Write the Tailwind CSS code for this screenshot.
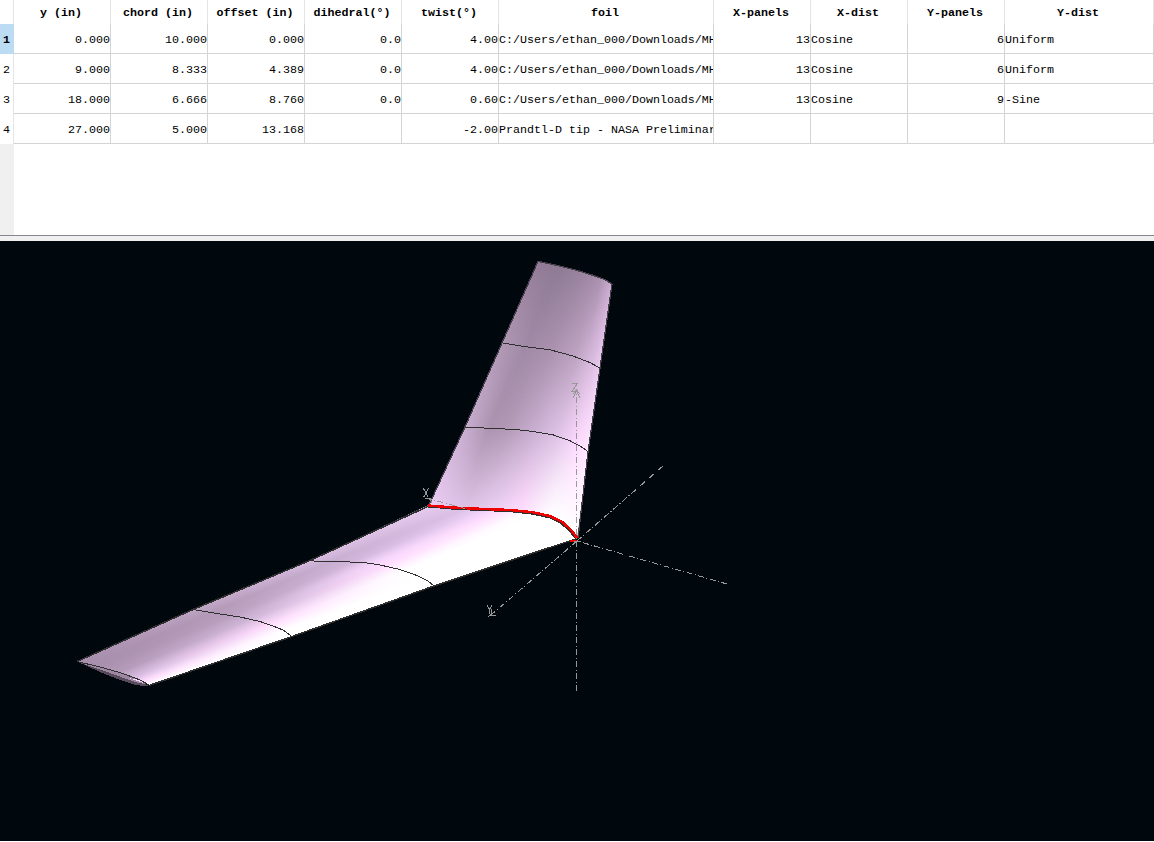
<!DOCTYPE html>
<html lang="en">
<head>
<meta charset="utf-8">
<title>Wing editor</title>
<script src="https://cdn.jsdelivr.net/npm/@tailwindcss/browser@4"></script>
</head>
<body class="w-[1154px] h-[842px] overflow-hidden bg-white flex flex-col font-['Liberation_Mono','Courier_New',monospace] text-[11.667px] text-black">
<section class="h-[235px] flex flex-col">
  <table class="table-fixed w-[1154px] border-separate border-spacing-0">
    <colgroup><col class="w-[14px]"><col class="w-[97px]"><col class="w-[97px]"><col class="w-[97px]"><col class="w-[97px]"><col class="w-[97px]"><col class="w-[215px]"><col class="w-[97px]"><col class="w-[97px]"><col class="w-[97px]"><col class="w-[149px]"></colgroup>
    <thead id="head"></thead>
    <tbody id="body"></tbody>
  </table>
  <div class="w-[14px] flex-1 bg-[#f0f0f0]"></div>
</section>
<div class="h-[6px] shrink-0 bg-[#f0f0f0] border-t border-[#86868e]"></div>
<main class="relative h-[600px] shrink-0 bg-[#00080d]">
  <canvas id="surface" width="1154" height="600" class="block"></canvas>
  <svg class="absolute inset-0" width="1154" height="600" viewBox="0 241 1154 600" fill="none" shape-rendering="crispEdges">
    <path d="M77 661.5 100 672 120 680 135 685 149 686.5 140 680 123 673 100 666.7Z" fill="#584b5c"/>
    <path d="M84 664 110 673 135 682 149 685 140 680 123 673 100 667Z" fill="#9d87a2"/>
    <path d="M128 678 149 685 140 680Z" fill="#f4dcf8"/>
    <g stroke="#303030" stroke-width="1">
      <path stroke="#48404c" stroke-width="1.3" d="M429 505 465 427 502 343 538 261.5 556.7 265.3 576.7 270.3 593 275.3 605 279.7 612 284 600 368 588 452 578 538"/>
      <path stroke-width="1.5" d="M77 661.5 193 609.5 311 560 429 506M149 685.5 292 636.5 434 586 577 538.5"/>
      <path d="M502 342.8 523 346.3 550 349.8 573 356 590 362.6 600 368M465 427.2 488 428.2 516 429.5 533 431.5 553 434.8 570 440.8 583 447.8 588 451.8"/>
      <path d="M311 560.5 317 561.5 350 562 367 563 380 565 400 569.5 417 575.5 428 581 434 586M193 609.5 220 614 240 617 260 621.5 273 626 283 630 292 636.5M77 661.5 100 667 123 673.5 140 680 149 685"/>
    </g>
    <path stroke="#303030" stroke-width="2" d="M428 506.5 457 509 477 509.8 510 511.2 533 513.7 550 517.5 561 523 569.5 530.5 576.5 539"/>
    <path stroke="#f00000" stroke-width="2.5" d="M428 505.5 457 507.8 477 508.7 510 510 533 512.3 550 516 562 521.7 570.5 529.3 577.5 538.5"/>
    <path stroke="#f00000" stroke-width="1.5" d="M570 541H577"/>
    <g stroke="#989898" stroke-width="1" stroke-dasharray="6 2.5 1 2.5">
      <path d="M576.5 691V392"/><path d="M727 584 577 541"/><path d="M426 498 465 508.5"/><path d="M577 541 663 466"/><path d="M577 541 491 615"/>
    </g>
    <g stroke="#989898" stroke-width="1">
      <path d="M573 398 576.5 391 580 398M573 394 576.5 390 580 394M574 541H579M425 498H431M429 498 432 503M491 609V616M488 617 492 614M490 615.5H496"/>
      <path d="M572 383.5H577.5L572 391.5H577.5M423.5 488.5 428.5 497.5M428.5 488.5 423.5 497.5M487 605 489.5 609.5 492 605M489.5 609.5V614"/>
    </g>
  </svg>
</main>
<script>
const titles = ['y (in)','chord (in)','offset (in)','dihedral(°)','twist(°)','foil','X-panels','X-dist','Y-panels','Y-dist'];
const path = 'C:/Users/ethan_000/Downloads/MH';
const rows = [
  ['0.000','10.000','0.000','0.0','4.00',path,'13','Cosine','6','Uniform'],
  ['9.000','8.333','4.389','0.0','4.00',path,'13','Cosine','6','Uniform'],
  ['18.000','6.666','8.760','0.0','0.60',path,'13','Cosine','9','-Sine'],
  ['27.000','5.000','13.168','','-2.00','Prandtl-D tip - NASA Preliminary','','','','']
];
document.getElementById('head').innerHTML = '<tr><th class="h-[24px] p-0 border-r border-[#e5e5e5]"></th>' +
  titles.map(t => `<th class="h-[24px] p-0 pt-px leading-[22px] font-bold text-center border-r border-[#e5e5e5] whitespace-nowrap"><span class="relative -left-px">${t}</span></th>`).join('') + '</tr>';
document.getElementById('body').innerHTML = rows.map((r, i) =>
  `<tr><th class="${i ? 'h-[30px] p-0 pt-[3px] pl-[3px] leading-[27px] font-normal text-left border-r border-[#e5e5e5]' : 'h-[30px] p-0 pt-[2px] pl-[3px] leading-[28px] font-bold text-left bg-[#bcdcf4] border-r border-[#bcdcf4]'}">${i + 1}</th>` +
  r.map((c, j) => `<td class="${[5,7,9].includes(j) ? 'text-left' : 'text-right'} h-[30px] p-0 pt-[3px] leading-[26px] border-r border-b border-[#d4d4d4] whitespace-nowrap overflow-hidden">${c}</td>`).join('') + '</tr>').join('');

// Wing sections: outline points along the chord, and shade stops along the chord.
const right = [
  {p:[[429,505],[457,507.5],[477,508.5],[510,510],[533,512.3],[550,516],[562,521.7],[570,529.3],[577,538]], c:[[0,'ecccf4'],[.25,'dcc2e4'],[.45,'ecd0f4'],[.62,'ffdcff'],[.82,'ffffff'],[1,'ffffff']]},
  {p:[[465,427],[488,428],[516,429.3],[533,431.3],[553,434.6],[570,440.6],[583,447.7],[588,452]], c:[[0,'c8aed0'],[.2,'ac94b0'],[.35,'b39bb7'],[.55,'c8aed0'],[.75,'e0c4e8'],[.92,'ffdcff'],[1,'ffe8ff']]},
  {p:[[502,342.5],[523,346],[550,349.5],[573,355.8],[590,362.3],[600,368]], c:[[0,'b098b4'],[.25,'a08aa6'],[.5,'aa92ae'],[.75,'bea4c3'],[.93,'dcbee2'],[1,'ecccf2']]},
  {p:[[538,261],[556.7,265],[576.7,270],[593,275],[605,279.3],[612,284]], c:[[0,'937c98'],[.3,'8f7b94'],[.6,'9a849f'],[.85,'ac92b1'],[1,'ceaed4']]}
];
const left = [
  {p:right[0].p, c:[[0,'e8ccf0'],[.25,'dcc2e6'],[.4,'efd3f8'],[.5,'ffdcff'],[.68,'ffffff'],[1,'ffffff']]},
  {p:[[311,560],[350,562],[367,563],[380,565],[400,569],[417,575],[428,581],[434,586]], c:[[0,'d8bce0'],[.18,'c8aed0'],[.35,'d4b8dc'],[.5,'f4d6fa'],[.6,'ffdcff'],[.76,'ffffff'],[1,'ffffff']]},
  {p:[[193,609.7],[220,613.7],[240,616.7],[260,621],[273,625.7],[283,630],[292,636.7]], c:[[0,'c0a6c6'],[.2,'b49ab8'],[.4,'bba1c0'],[.6,'d2b8da'],[.78,'ffdcff'],[.92,'ffffff'],[1,'ffffff']]},
  {p:[[77,661.5],[100,666.7],[123,673],[140,680],[149,685]], c:[[0,'a890ad'],[.3,'a890ad'],[.6,'b49ab9'],[.8,'d8bce0'],[.92,'ffdcff'],[1,'ffffff']]}
];
const ctx = document.getElementById('surface').getContext('2d');
const mix = (a, b, u) => a.map((v, i) => v + (b[i] - v) * u);
const hex = h => [0, 2, 4].map(i => parseInt(h.slice(i, i + 2), 16));
function point(s, t) {
  const p = s.p, x = p[0][0] + (p[p.length - 1][0] - p[0][0]) * t;
  let i = 0; while (i < p.length - 2 && x > p[i + 1][0]) i++;
  return mix(p[i], p[i + 1], (x - p[i][0]) / (p[i + 1][0] - p[i][0]));
}
function shade(s, t) {
  const c = s.c; let i = 0; while (i < c.length - 2 && t > c[i + 1][0]) i++;
  return mix(hex(c[i][1]), hex(c[i + 1][1]), (t - c[i][0]) / (c[i + 1][0] - c[i][0]));
}
for (const wing of [left, right]) {
  // Keep the cell strokes inside the wing outline.
  ctx.save(); ctx.beginPath();
  const edge = [...wing.map(s => s.p[0]), ...wing[3].p, ...wing.slice(0, 3).reverse().map(s => s.p[s.p.length - 1]), ...wing[0].p.slice().reverse()];
  edge.forEach(([x, y]) => ctx.lineTo(x, y - 241));
  ctx.closePath(); ctx.clip();
  for (let k = 0; k < 3; k++) {
    const a = wing[k], b = wing[k + 1], N = 72, M = 48;
    for (let i = 0; i < N; i++) for (let j = 0; j < M; j++) {
      const t = i / N, t2 = (i + 1) / N, u = j / M, u2 = (j + 1) / M;
      const q = [[t,u],[t2,u],[t2,u2],[t,u2]].map(([x, y]) => mix(point(a, x), point(b, x), y));
      ctx.fillStyle = ctx.strokeStyle = `rgb(${mix(shade(a, t), shade(b, t), u).map(Math.round).join(',')})`;
      ctx.lineWidth = 1.4; ctx.lineJoin = 'round'; ctx.beginPath();
      q.forEach(([x, y]) => ctx.lineTo(x, y - 241));
      ctx.closePath(); ctx.fill(); ctx.stroke();
    }
  }
  ctx.restore();
}
</script>
</body>
</html>
